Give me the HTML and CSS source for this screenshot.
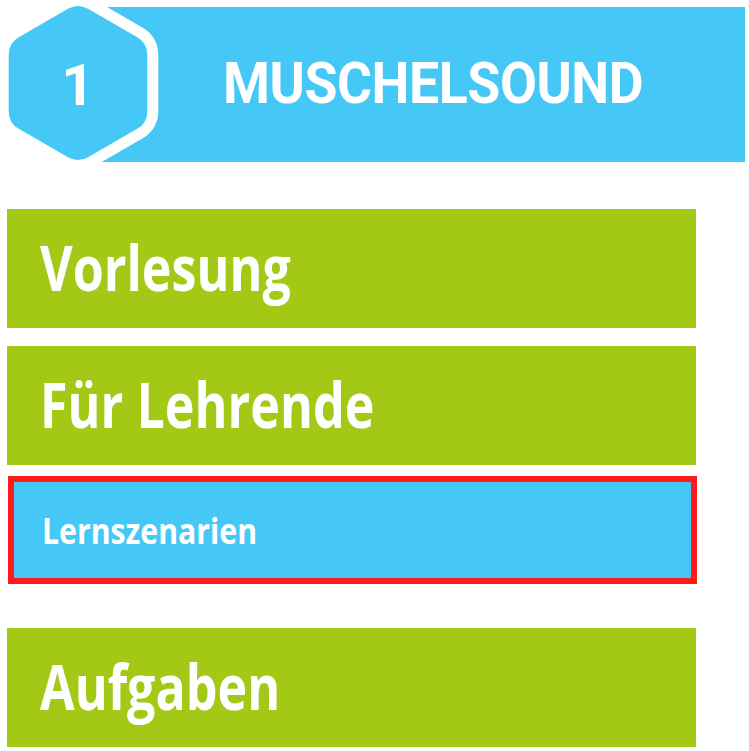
FILE: index.html
```html
<!DOCTYPE html>
<html lang="de">
<head>
<meta charset="utf-8">
<title>Muschelsound</title>
<link rel="stylesheet" href="styles.css">
</head>
<body>
<header class="hero">
  <svg class="hex" width="170" height="170" viewBox="0 0 170 170">
    <polygon class="hex-ring" points="78,26.1 127.3,54.55 127.3,111.45 78,139.9 28.7,111.45 28.7,54.55"/>
    <polygon class="hex-fill" points="78,26.1 127.3,54.55 127.3,111.45 78,139.9 28.7,111.45 28.7,54.55"/>
    <text class="hex-num" x="78" y="105" text-anchor="middle">1</text>
  </svg>
  <div class="bar"><span class="title">MUSCHELSOUND</span></div>
</header>
<nav class="menu">
  <div class="item green big"><span class="label">Vorlesung</span></div>
  <div class="item green big"><span class="label">Für Lehrende</span></div>
  <div class="item blue small"><span class="label label-sm">Lernszenarien</span></div>
  <div class="item green big last"><span class="label">Aufgaben</span></div>
</nav>
</body>
</html>
```
FILE: styles.css
```css
html, body {
  margin: 0;
  padding: 0;
  background: #ffffff;
}
body {
  width: 749px;
  height: 751px;
  overflow: hidden;
}
.hero {
  position: relative;
  height: 162px;
  padding-top: 7px;
  box-sizing: border-box;
}
.hex {
  position: absolute;
  left: 0;
  top: 0;
  z-index: 2;
}
.hex-ring {
  fill: #ffffff;
  stroke: #ffffff;
  stroke-width: 62;
  stroke-linejoin: round;
}
.hex-fill {
  fill: #45c8f6;
  stroke: #45c8f6;
  stroke-width: 40;
  stroke-linejoin: round;
}
.hex-num {
  fill: #ffffff;
  font-family: Roboto, "Open Sans", sans-serif;
  font-weight: 700;
  font-size: 58px;
}
.bar {
  margin-left: 100px;
  width: 645px;
  height: 155px;
  background: #45c8f6;
  padding: 47px 0 0 123px;
  box-sizing: border-box;
}
.title {
  display: inline-block;
  color: #ffffff;
  font-family: Roboto, "Open Sans", sans-serif;
  font-weight: 700;
  font-size: 58px;
  line-height: 58px;
  letter-spacing: -0.5px;
  transform: scaleX(0.925);
  transform-origin: left center;
  white-space: nowrap;
}
.menu {
  display: flex;
  flex-direction: column;
  padding-top: 47px;
}
.item {
  box-sizing: border-box;
  width: 689px;
  margin-left: 7px;
  color: #ffffff;
  font-family: "Open Sans", sans-serif;
  font-weight: 700;
}
.label {
  display: inline-block;
  transform: scaleX(0.81);
  transform-origin: left center;
  white-space: nowrap;
}
.label-sm {
  transform: scaleX(0.84);
}
.green {
  background: #a3c816;
}
.big {
  height: 119px;
  padding: 27px 0 0 33px;
  font-size: 62px;
  line-height: 62px;
  margin-bottom: 18px;
}
.blue {
  background: #45c8f6;
  border: 6px solid #ff1a1a;
  margin-left: 8px;
  margin-top: -7px;
  height: 108px;
  padding: 31px 0 0 28px;
  font-size: 36px;
  line-height: 36px;
  margin-bottom: 44px;
}
```
